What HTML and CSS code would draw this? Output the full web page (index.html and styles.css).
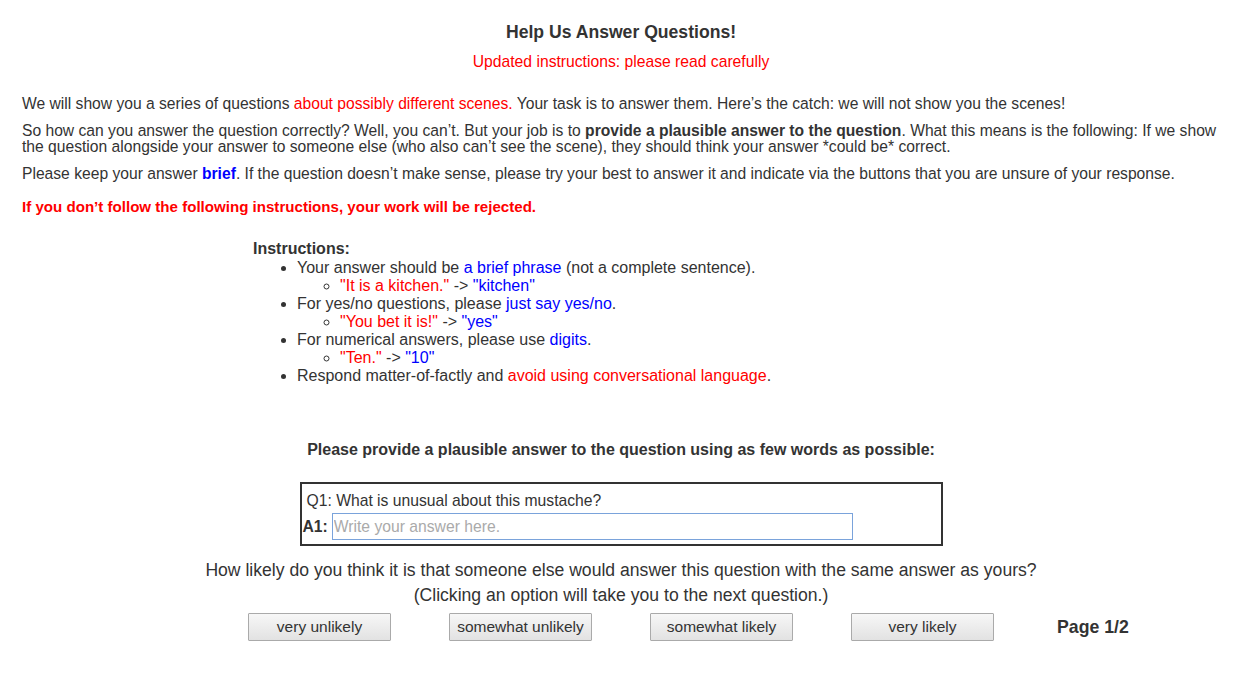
FILE: index.html
```html
<!DOCTYPE html>
<html>
<head>
<meta charset="utf-8">
<link rel="stylesheet" href="styles.css">
</head>
<body>
<div class="page">
  <h1 class="title">Help Us Answer Questions!</h1>
  <p class="updated">Updated instructions: please read carefully</p>
  <div class="intro">
    <p>We will show you a series of questions <span class="red">about possibly different scenes.</span> Your task is to answer them. Here’s the catch: we will not show you the scenes!</p>
    <p>So how can you answer the question correctly? Well, you can’t. But your job is to <b>provide a plausible answer to the question</b>. What this means is the following: If we show the question alongside your answer to someone else (who also can’t see the scene), they should think your answer *could be* correct.</p>
    <p>Please keep your answer <b class="blue">brief</b>. If the question doesn’t make sense, please try your best to answer it and indicate via the buttons that you are unsure of your response.</p>
    <p class="warn">If you don’t follow the following instructions, your work will be rejected.</p>
  </div>
  <div class="instructions">
    <div class="inst-title">Instructions:</div>
    <ul>
      <li>Your answer should be <span class="blue">a brief phrase</span> (not a complete sentence).
        <ul><li><span class="red">"It is a kitchen."</span> -&gt; <span class="blue">"kitchen"</span></li></ul>
      </li>
      <li>For yes/no questions, please <span class="blue">just say yes/no</span>.
        <ul><li><span class="red">"You bet it is!"</span> -&gt; <span class="blue">"yes"</span></li></ul>
      </li>
      <li>For numerical answers, please use <span class="blue">digits</span>.
        <ul><li><span class="red">"Ten."</span> -&gt; <span class="blue">"10"</span></li></ul>
      </li>
      <li>Respond matter-of-factly and <span class="red">avoid using conversational language</span>.</li>
    </ul>
  </div>
  <div class="prompt">Please provide a plausible answer to the question using as few words as possible:</div>
  <div class="qbox">
    <div class="q">Q1: What is unusual about this mustache?</div>
    <div class="a"><b>A1:</b><input class="answer" type="text" placeholder="Write your answer here."></div>
  </div>
  <div class="likely">How likely do you think it is that someone else would answer this question with the same answer as yours?</div>
  <div class="likely">(Clicking an option will take you to the next question.)</div>
  <div class="buttons">
    <button class="btn">very unlikely</button>
    <button class="btn">somewhat unlikely</button>
    <button class="btn">somewhat likely</button>
    <button class="btn">very likely</button>
    <span class="pagenum">Page 1/2</span>
  </div>
</div>
</body>
</html>
```
FILE: styles.css
```css
html, body {
  margin: 0;
  padding: 0;
  background: #fff;
}
body {
  font-family: "Liberation Sans", Arial, sans-serif;
  color: #333;
  font-size: 15.65px;
}
.page {
  padding: 0 31px 0 22px;
}
.title {
  font-size: 17.6px;
  font-weight: bold;
  text-align: center;
  margin: 0;
  padding-top: 22px;
  line-height: 20px;
}
.updated {
  color: #f00;
  text-align: center;
  font-size: 15.7px;
  margin: 11px 0 0;
  line-height: 18px;
}
.intro {
  margin-top: 25px;
}
.intro p {
  margin: 0 0 11px;
  line-height: 16px;
}
.intro p.warn {
  margin-top: 17px;
  color: #f00;
  font-weight: bold;
  font-size: 15.1px;
}
.red { color: #f00; }
.blue { color: #00f; }
.instructions {
  margin-left: 231px;
  margin-top: 25px;
  font-size: 16px;
  line-height: 18px;
}
.inst-title {
  font-weight: bold;
  margin-bottom: 1px;
}
.instructions ul {
  margin: 0;
  padding-left: 44px;
}
.instructions ul ul {
  padding-left: 43px;
  list-style-type: circle;
}
.prompt {
  font-weight: bold;
  text-align: center;
  font-size: 16px;
  margin-top: 55px;
  line-height: 20px;
}
.qbox {
  width: 643px;
  margin: 22px auto 0;
  border: 2px solid #333;
  padding: 8px 0 3px 1px;
  box-sizing: border-box;
  height: 64px;
  font-size: 15.7px;
}
.q {
  padding-left: 4px;
  line-height: 18px;
}
.a {
  display: flex;
  align-items: center;
  gap: 4px;
  margin-top: 3px;
}
.answer {
  width: 521px;
  height: 27px;
  box-sizing: border-box;
  border: 1px solid #7aa3db;
  font-family: "Liberation Sans", Arial, sans-serif;
  font-size: 15.7px;
  padding: 0 1px;
  color: #333;
}
.answer::placeholder {
  color: #aaa;
}
.likely {
  text-align: center;
  font-size: 17.6px;
  line-height: 25px;
}
.qbox + .likely {
  margin-top: 12px;
}
.buttons {
  display: flex;
  align-items: center;
  padding-left: 226px;
  margin-top: 5px;
}
.btn {
  width: 143px;
  height: 28px;
  margin-right: 58px;
  font-family: "Liberation Sans", Arial, sans-serif;
  font-size: 15.5px;
  color: #333;
  background: linear-gradient(#f7f7f7, #e2e2e2);
  border: 1px solid #aaa;
  border-radius: 1px;
  padding: 0;
}
.pagenum {
  font-weight: bold;
  font-size: 17.7px;
  margin-left: 5px;
}
```
